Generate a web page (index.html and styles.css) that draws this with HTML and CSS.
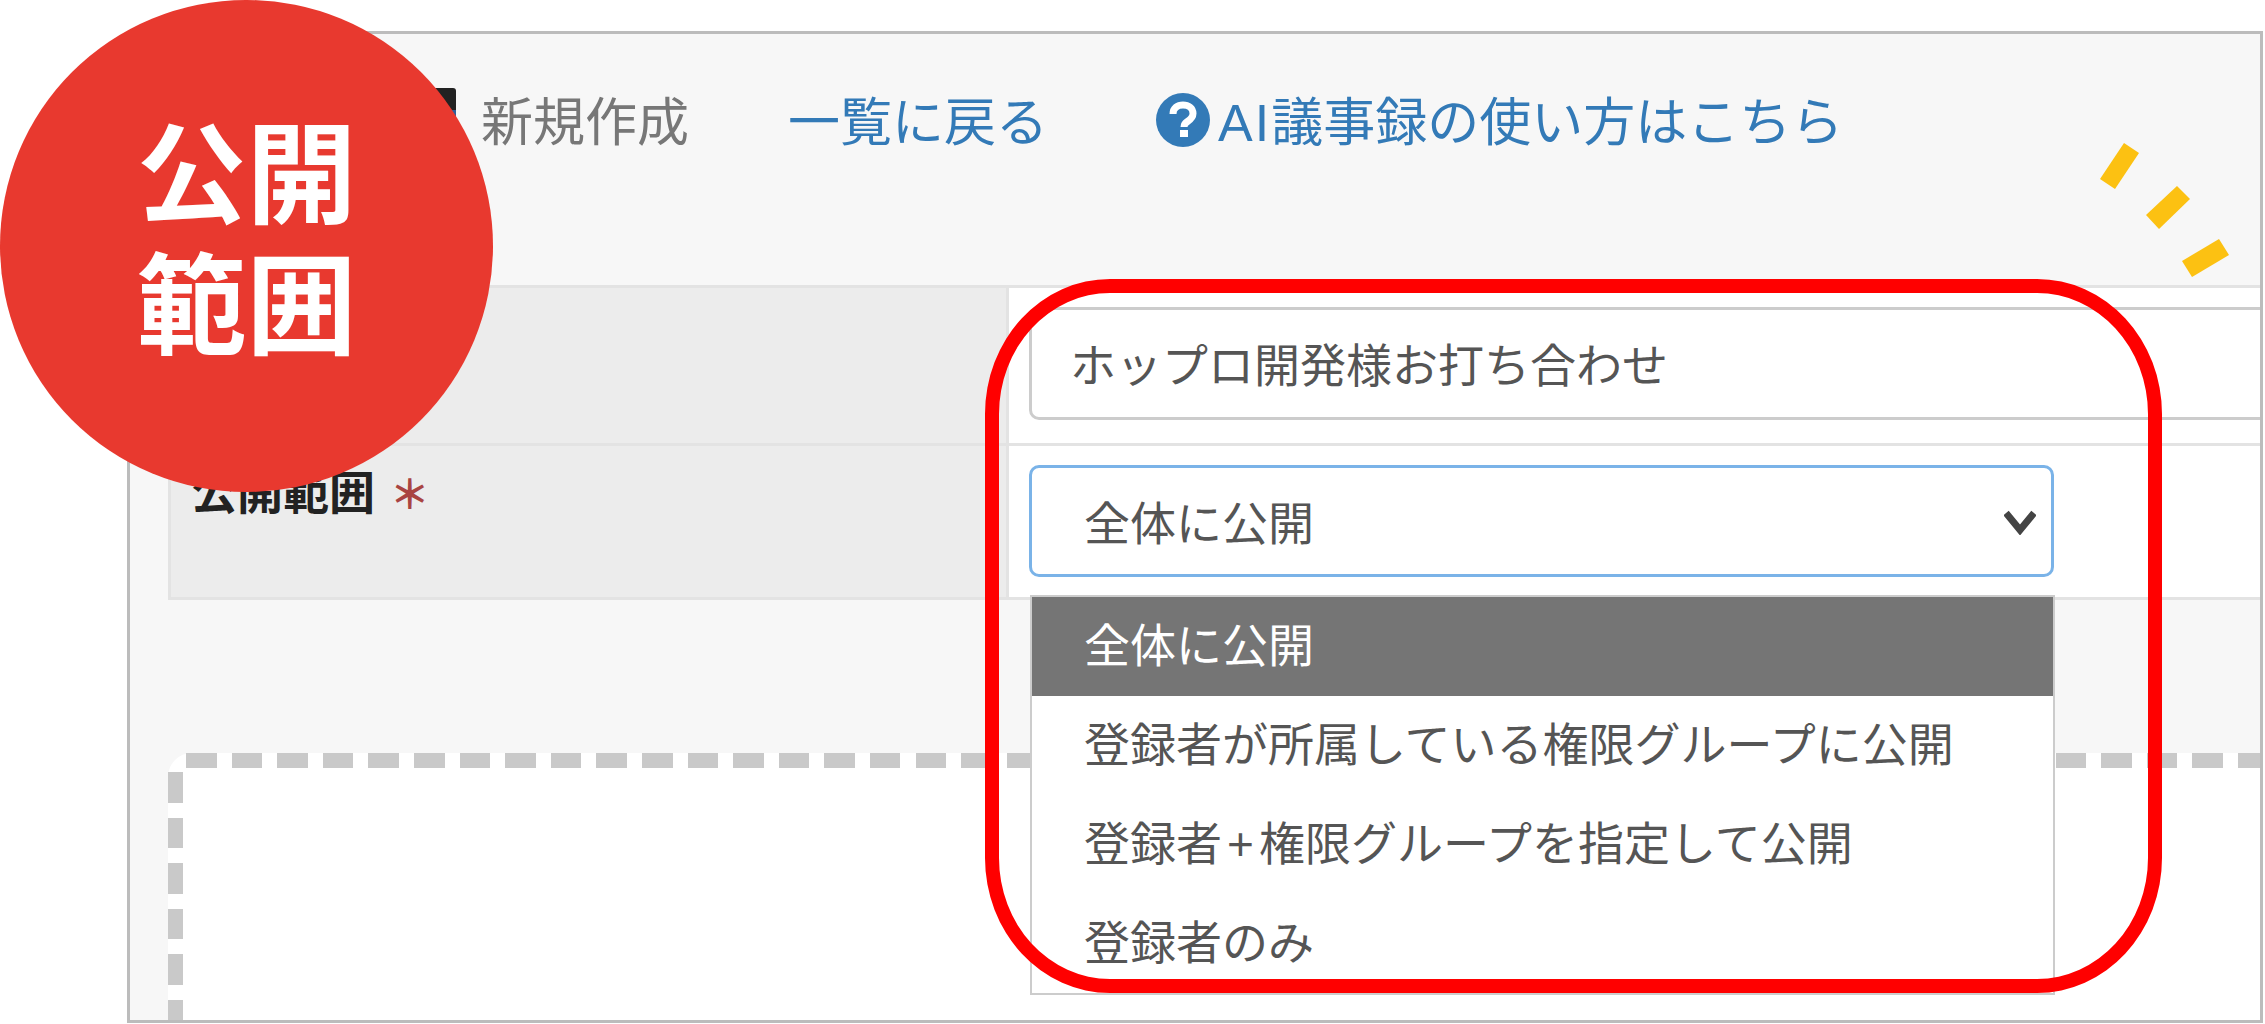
FILE: index.html
```html
<!DOCTYPE html>
<html lang="ja">
<head>
    <meta charset="UTF-8">
    <meta name="viewport" content="width=device-width, initial-scale=1.0">
    <title>公開範囲</title>
    <link rel="stylesheet" href="styles.css">
</head>
<body>
    <div class="page">
        <div class="frame">
            <div class="toolbar">
                <svg class="new-icon" viewBox="0 0 46 46">
                    <rect width="46" height="46" rx="3" fill="#222"/>
                    <rect x="40" y="22" width="6" height="10" fill="#2f5f9a"/>
                </svg>
                <span class="new-link">新規作成</span>
                <a class="back-link">一覧に戻る</a>
                <a class="help-link">
                    <svg class="help-icon" viewBox="0 0 54 54">
                        <circle cx="27" cy="27" r="27" fill="#337ab7"/>
                        <path d="M17 21c0-6 4.500-9 10-9s10 3 10 8.500c0 4-2.500 6-5.500 8-2.500 1.600-3.500 2.800-3.500 5.500" fill="none" stroke="#fff" stroke-width="7"/>
                        <rect x="24" y="37" width="8" height="7" fill="#fff"/>
                    </svg>
                    <span class="ai-label">AI</span>議事録の使い方はこちら
                </a>
            </div>

            <div class="form-table">
                <div class="label-cell"></div>
                <div class="field-cell">
                    <div class="text-input">ホップロ開発様お打ち合わせ</div>
                </div>
                <div class="label-cell">
                    <span class="label-text">公開範囲</span>
                    <span class="required">＊</span>
                </div>
                <div class="field-cell">
                    <div class="select-box">
                        全体に公開
                        <svg class="chevron" viewBox="0 0 32 26">
                            <path d="M2 4l14 17L30 4" fill="none" stroke="#444" stroke-width="7"/>
                        </svg>
                        <ul class="select-menu">
                            <li class="selected">全体に公開</li>
                            <li>登録者が所属している権限グループに公開</li>
                            <li>登録者<span class="plus">+</span>権限グループを指定して公開</li>
                            <li>登録者のみ</li>
                        </ul>
                    </div>
                </div>
            </div>

            <div class="drop-area"></div>
        </div>

        <svg class="sparks" viewBox="0 0 140 150">
            <polygon points="34,4 49,14 25,50 10,40"/>
            <polygon points="87,47 100,60 69,90 56,76"/>
            <polygon points="129,100 139,116 102,138 92,122"/>
        </svg>
        <div class="highlight-ring"></div>
        <div class="badge">公開<br>範囲</div>
    </div>
</body>
</html>
```

FILE: styles.css
```css
body {
    margin: 0;
    background-color: #fff;
    font-family: "Liberation Sans", "Noto Sans CJK JP", sans-serif;
}
ul {
    list-style: none;
    margin: 0;
    padding: 0;
}
.page {
    position: relative;
    width: 2265px;
    height: 1024px;
    overflow: hidden;
    padding-top: 31px;
    padding-left: 127px;
    box-sizing: border-box;
}
.frame {
    width: 2136px;
    height: 992px;
    box-sizing: border-box;
    border: 3px solid #bcbcbc;
    background-color: #f7f7f7;
    overflow: hidden;
}

/* toolbar */
.toolbar {
    display: flex;
    align-items: center;
    box-sizing: border-box;
    height: 251px;
    padding: 59px 0 132px 280px;
    font-size: 52px;
    line-height: 60px;
    white-space: nowrap;
}
.new-icon {
    width: 46px;
    height: 46px;
    margin-bottom: 24px;
    flex-shrink: 0;
}
.new-link {
    margin-left: 25px;
    color: #777;
}
.back-link {
    margin-left: 99px;
    color: #337ab7;
}
.help-link {
    display: flex;
    align-items: center;
    margin-left: 108px;
    color: #337ab7;
}
.help-icon {
    width: 54px;
    height: 54px;
    margin-right: 8px;
    margin-bottom: 6px;
}
.ai-label {
    letter-spacing: 2px;
}

/* form rows */
.form-table {
    display: grid;
    grid-template-columns: 838px 1300px;
    grid-template-rows: 158px 154px;
    margin-left: 38px;
    border-bottom: 3px solid #e3e3e3;
}
.label-cell {
    box-sizing: border-box;
    border-top: 3px solid #e3e3e3;
    border-left: 3px solid #e3e3e3;
    background-color: #ececec;
    padding: 17px 0 0 20px;
    font-size: 46px;
    line-height: 60px;
}
.label-text {
    font-weight: bold;
    color: #222;
}
.required {
    margin-left: 2px;
    font-size: 40px;
    font-weight: bold;
    color: #a94442;
}
.field-cell {
    box-sizing: border-box;
    border-top: 3px solid #e3e3e3;
    border-left: 3px solid #e3e3e3;
    background-color: #fff;
    padding: 19px 0 0 20px;
    font-size: 46px;
    color: #555;
}
.text-input {
    box-sizing: border-box;
    width: 1400px;
    height: 113px;
    padding-left: 38px;
    border: 3px solid #ccc;
    border-radius: 10px;
    line-height: 112px;
}

/* select and its open menu */
.select-box {
    position: relative;
    box-sizing: border-box;
    width: 1025px;
    height: 112px;
    padding-left: 52px;
    border: 3px solid #7ab3e8;
    border-radius: 10px;
    line-height: 112px;
}
.chevron {
    position: absolute;
    right: 15px;
    top: 41px;
    width: 32px;
    height: 26px;
}
.select-menu {
    position: absolute;
    z-index: 1;
    left: -2px;
    top: 127px;
    width: 1025px;
    box-sizing: border-box;
    border: 2px solid #ccc;
    background-color: #fff;
}
.select-menu li {
    height: 99px;
    padding-left: 52px;
    line-height: 98px;
    white-space: nowrap;
}
.select-menu .selected {
    background-color: #757575;
    color: #fff;
}
.plus {
    padding: 0 5px;
}

/* dashed area below the form */
.drop-area {
    position: relative;
    width: 2200px;
    height: 500px;
    margin-top: 153px;
    margin-left: 38px;
    border-top-left-radius: 24px;
    background-color: #fff;
}
.drop-area::before {
    content: "";
    position: absolute;
    left: 18px;
    right: 0;
    top: 0;
    height: 15px;
    background: repeating-linear-gradient(90deg, #c9c9c9 0, #c9c9c9 30.5px, transparent 30.5px, transparent 45.6px);
}
.drop-area::after {
    content: "";
    position: absolute;
    left: 0;
    top: 19px;
    bottom: 0;
    width: 15px;
    background: repeating-linear-gradient(180deg, #c9c9c9 0, #c9c9c9 30.5px, transparent 30.5px, transparent 45.6px);
}

/* callouts laid over the screenshot */
.sparks {
    position: absolute;
    left: 2090px;
    top: 139px;
    width: 140px;
    height: 150px;
    fill: #fcc112;
}
.highlight-ring {
    position: absolute;
    z-index: 2;
    left: 985px;
    top: 279px;
    width: 1177px;
    height: 714px;
    box-sizing: border-box;
    border: 14px solid #f00;
    border-radius: 125px / 135px;
}
.badge {
    position: absolute;
    z-index: 3;
    left: 0;
    top: 0;
    display: flex;
    align-items: center;
    justify-content: center;
    width: 493px;
    height: 484px;
    padding-bottom: 8px;
    border-radius: 246px / 246px;
    background-color: #e8392f;
    background-clip: border-box;
    color: #fff;
    font-size: 110px;
    font-weight: bold;
    line-height: 131px;
    text-align: center;
}
```
